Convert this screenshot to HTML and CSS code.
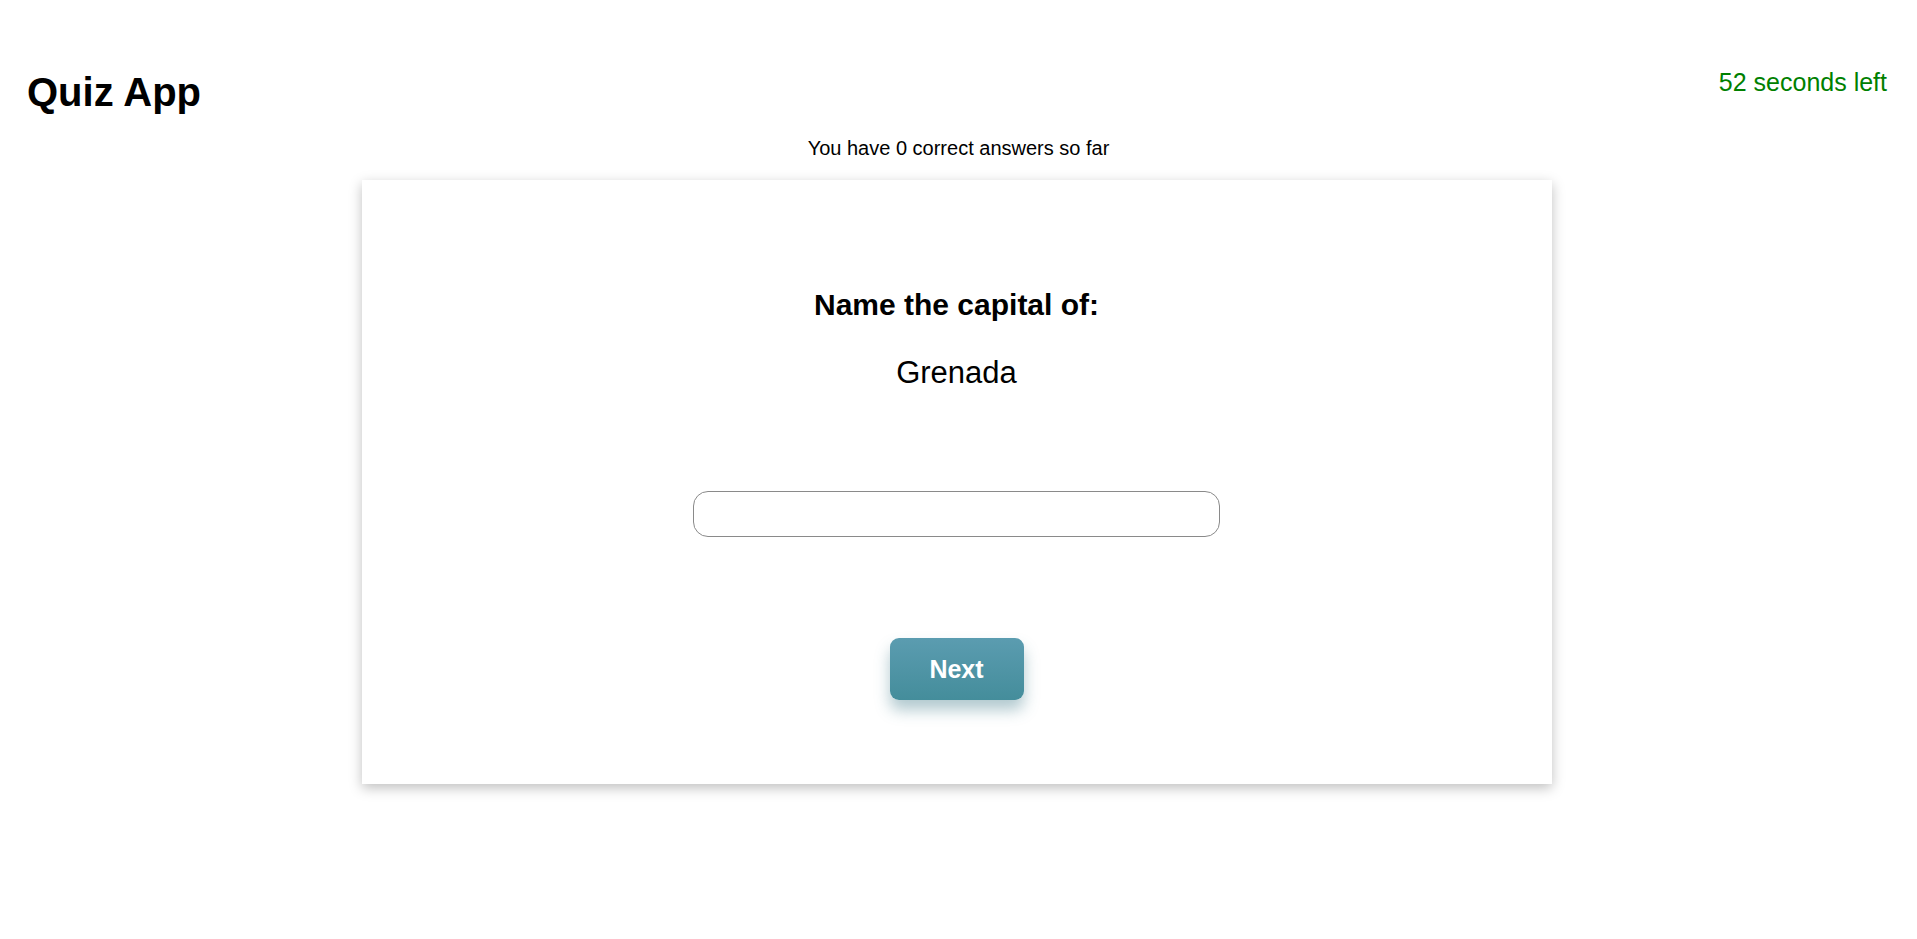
FILE: index.html
```html
<!DOCTYPE html>
<html lang="en">
<head>
<meta charset="utf-8">
<title>Quiz App</title>
<link rel="stylesheet" href="styles.css">
</head>
<body>
<header class="header">
  <h1 class="title">Quiz App</h1>
  <div class="timer">52 seconds left</div>
</header>
<p class="score">You have 0 correct answers so far</p>
<main class="card">
  <h2 class="question">Name the capital of:</h2>
  <div class="country">Grenada</div>
  <input class="answer" type="text" aria-label="Answer">
  <button class="next" type="button">Next</button>
</main>
</body>
</html>
```
FILE: styles.css
```css
html, body {
  margin: 0;
  padding: 0;
  background: #ffffff;
  font-family: "Liberation Sans", Arial, sans-serif;
  color: #000;
}

body {
  min-height: 939px;
}

.header {
  display: flex;
  justify-content: space-between;
  align-items: flex-start;
  padding: 0 30px 0 27px;
}

.title {
  margin: 69px 0 0 0;
  font-size: 40px;
  font-weight: bold;
  line-height: 46px;
}

.timer {
  margin-top: 68px;
  font-size: 25px;
  line-height: 28px;
  color: #008000;
}

.score {
  margin: 22px 0 0 0;
  text-align: center;
  font-size: 20px;
  line-height: 23px;
}

.card {
  width: 1190px;
  margin: 20px auto 0 calc(50% - 597px);
  box-sizing: border-box;
  padding: 108px 0 84px;
  background: #fff;
  box-shadow: 0 4px 12px rgba(0, 0, 0, 0.25);
  display: flex;
  flex-direction: column;
  align-items: center;
}

.question {
  margin: 0;
  font-size: 30px;
  line-height: 34px;
  font-weight: bold;
}

.country {
  margin-top: 33px;
  font-size: 31px;
  line-height: 35px;
}

.answer {
  margin-top: 101px;
  width: 527px;
  height: 46px;
  box-sizing: border-box;
  border: 1px solid #8a8a8a;
  border-radius: 15px;
  padding: 0 14px;
  font-size: 18px;
  font-family: inherit;
  outline: none;
}

.next {
  margin-top: 101px;
  width: 134px;
  height: 62px;
  border: none;
  border-radius: 9px;
  background: linear-gradient(to bottom, #5b9cb0, #448d9b);
  color: #fff;
  font-family: "Liberation Sans", Arial, sans-serif;
  font-weight: bold;
  font-size: 25px;
  box-shadow: 0 10px 15px rgba(60, 120, 135, 0.4);
  cursor: pointer;
}
```
